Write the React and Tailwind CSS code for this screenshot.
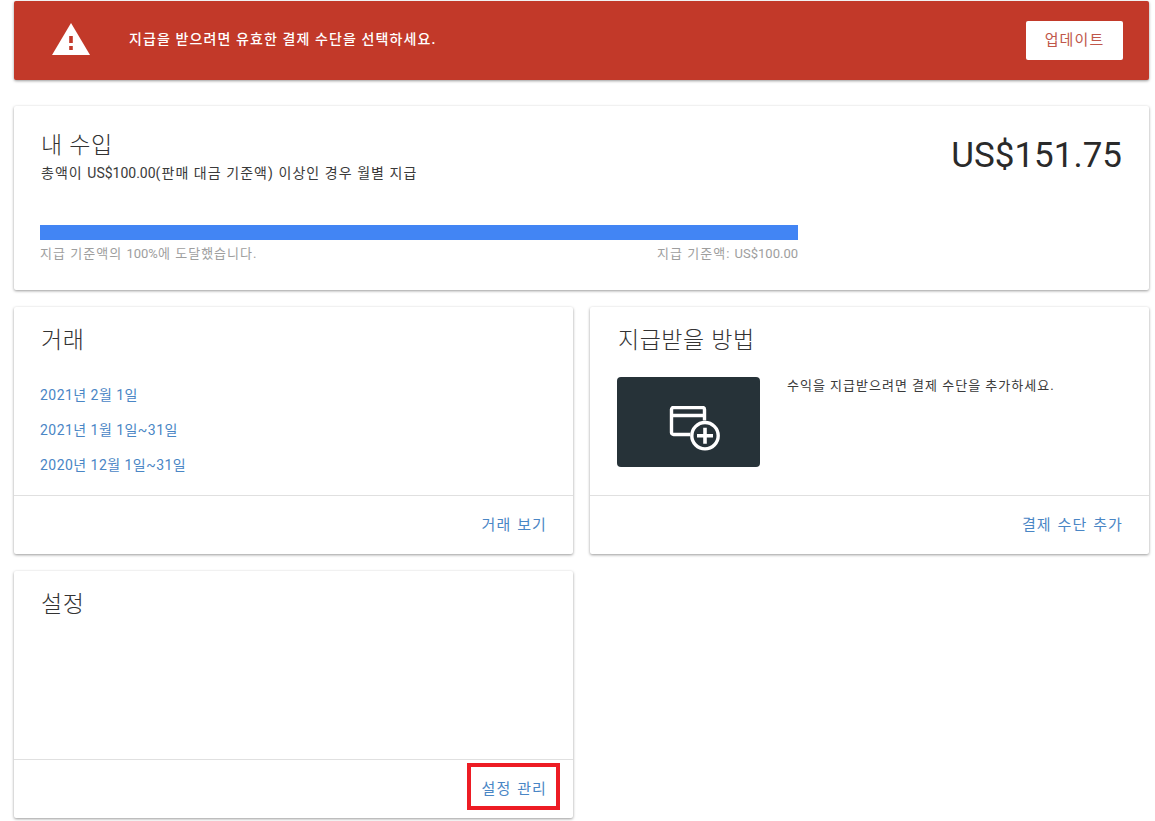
function Card({ className = '', children }) {
  return (
    <div className={`bg-white rounded-[2px] shadow-[0_1px_3px_rgba(0,0,0,0.4)] ${className}`}>
      {children}
    </div>
  )
}

function CardFooter({ children }) {
  return (
    <div className="h-[59px] border-t border-[#e0e0e0] flex items-center justify-end pl-[27px] pr-[26px] text-[15px] tracking-[1.1px] [word-spacing:1px] text-[#4a86c5]">
      {children}
    </div>
  )
}

function Title({ children }) {
  return <h2 className="ml-px text-[23px] font-light leading-[32px] tracking-[0.5px] [word-spacing:0.5px] text-[#333333]">{children}</h2>
}

// latin runs keep normal spacing, the hangul around them is tracked
function Latin({ children }) {
  return <span className="tracking-normal">{children}</span>
}

function AddCardIcon() {
  return (
    <svg width="52" height="46" viewBox="0 0 52 46" fill="none" stroke="white" strokeWidth="3.4">
      <path d="M22 28.5H5.5a2 2 0 0 1-2-2V3.5a2 2 0 0 1 2-2h29a2 2 0 0 1 2 2v11" />
      <path d="M3.5 9.5h33" />
      <circle cx="37" cy="29.7" r="13.2" />
      <path d="M37 21.7v16M29 29.7h16" strokeWidth="3.6" />
    </svg>
  )
}

export default function App() {
  return (
    <div className="relative h-[821px] w-[1155px] bg-white overflow-hidden pl-[14px] pr-[6px] pt-px font-['Roboto','Noto_Sans_CJK_KR',sans-serif] text-[#212121]">
      {/* payment warning */}
      <div className="h-[79px] bg-[#c23929] rounded-[2px] shadow-[0_1px_3px_rgba(0,0,0,0.4)] flex items-center pl-[38px] pr-[26px]">
        <svg width="38" height="32" viewBox="0 0 38 32" className="mb-[3px]">
          <path d="M19 0L38 32H0Z" fill="white" />
          <path d="M17.2 13h3.6v7h-3.6zM17.2 23h3.6v4h-3.6z" fill="#c23929" />
        </svg>
        <span className="ml-[39px] mb-[2px] text-[14px] font-medium text-white tracking-[1.1px]">
          지급을 받으려면 유효한 결제 수단을 선택하세요.
        </span>
        <button className="ml-auto w-[97px] h-[39px] bg-white rounded-[2px] text-[15px] tracking-[1.1px] text-[#c0574a]">
          업데이트
        </button>
      </div>

      {/* earnings */}
      <Card className="mt-[26px] h-[184px] px-[26px] pt-[24px]">
        <div className="flex justify-between">
          <div>
            <Title>내 수입</Title>
            <p className="ml-px text-[14px] leading-[20px] mt-[1px] tracking-[1.05px] text-[#3a3a3a]">
              총액이 <Latin>US$100.00</Latin>(판매 대금 기준액) 이상인 경우 월별 지급
            </p>
          </div>
          <div className="text-[35px] leading-[50px] pr-px pt-px text-[#2a2a2a]">US$151.75</div>
        </div>
        <div className="mt-[42px] w-[758px]">
          <div className="h-[15px] bg-[#4285f4]" />
          <div className="flex justify-between text-[13px] leading-[18px] mt-[5px] tracking-[1.03px] text-[#9e9e9e]">
            <span>지급 기준액의 <Latin>100%</Latin>에 도달했습니다.</span>
            <span>지급 기준액: <Latin>US$100.00</Latin></span>
          </div>
        </div>
      </Card>

      <div className="grid grid-cols-2 gap-x-[17px] gap-y-[17px] mt-[17px]">
        {/* transactions */}
        <Card className="h-[247px] flex flex-col">
          <div className="flex-1 px-[26px] pt-[18px]">
            <Title>거래</Title>
            <div className="mt-[28px] flex flex-col gap-[15px] text-[14px] leading-[20px] tracking-[0.46px] text-[#4a86c5]">
              <span>2021년 2월 1일</span>
              <span>2021년 1월 1일~31일</span>
              <span>2020년 12월 1일~31일</span>
            </div>
          </div>
          <CardFooter>거래 보기</CardFooter>
        </Card>

        {/* payment method */}
        <Card className="h-[247px] flex flex-col">
          <div className="flex-1 px-[27px] pt-[18px]">
            <Title>지급받을 방법</Title>
            <div className="mt-[20px] flex gap-[27px]">
              <div className="w-[143px] h-[90px] bg-[#263238] rounded-[4px] flex items-center justify-center pl-[11px] pt-[14px]">
                <AddCardIcon />
              </div>
              <p className="text-[13px] leading-[18px] tracking-[1px] text-[#3a3a3a]">수익을 지급받으려면 결제 수단을 추가하세요.</p>
            </div>
          </div>
          <CardFooter>결제 수단 추가</CardFooter>
        </Card>

        {/* settings */}
        <Card className="h-[247px] flex flex-col">
          <div className="flex-1 px-[26px] pt-[18px]">
            <Title>설정</Title>
          </div>
          <CardFooter>설정 관리</CardFooter>
        </Card>
      </div>

      {/* highlight box drawn over the screenshot */}
      <div className="absolute left-[467px] top-[763px] w-[93px] h-[47px] border-[4px] border-[#ed1c24]" />
    </div>
  )
}
